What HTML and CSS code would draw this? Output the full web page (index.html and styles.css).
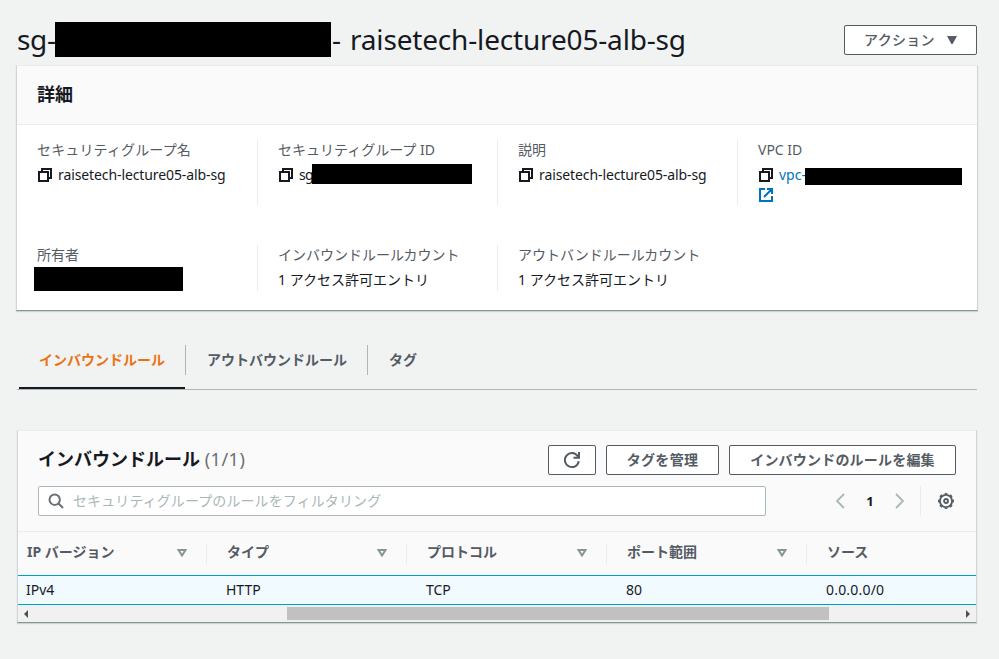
FILE: index.html
```html
<!DOCTYPE html>
<html lang="ja">
<head>
<meta charset="utf-8">
<title>raisetech-lecture05-alb-sg</title>
<link rel="stylesheet" href="styles.css">
</head>
<body>
<svg class="defs" width="0" height="0">
  <symbol id="copy" viewBox="0 0 16 16"><path d="M2 5h9v9H2zM5 5V2h9v9h-3" fill="none" stroke="currentColor" stroke-width="2"/></symbol>
  <symbol id="sort" viewBox="0 0 10 8"><path d="M1.500 1h7L5 6.500z" fill="none" stroke="currentColor" stroke-width="2"/></symbol>
</svg>
<main class="page">
  <header class="page-header">
    <h1 class="title"><span class="title-prefix">sg-</span><span class="mask mask-title"></span><span class="title-dash">-</span><span class="title-name">raisetech-lecture05-alb-sg</span></h1>
    <button class="btn btn-actions">アクション<svg width="10" height="8" viewBox="0 0 10 8"><path d="M0 0h10L5.600 8H4.400z" fill="currentColor"/></svg></button>
  </header>

  <section class="card details">
    <h2 class="card-title">詳細</h2>
    <div class="details-grid">
      <div class="field">
        <div class="label wide">セキュリティグループ名</div>
        <div class="value"><svg class="icon"><use href="#copy"/></svg><span class="latin">raisetech-lecture05-alb-sg</span></div>
      </div>
      <div class="field">
        <div class="label">セキュリティグループ ID</div>
        <div class="value"><svg class="icon"><use href="#copy"/></svg><span class="sg">sg</span><span class="mask mask-sg"></span></div>
      </div>
      <div class="field">
        <div class="label">説明</div>
        <div class="value"><svg class="icon"><use href="#copy"/></svg><span class="latin">raisetech-lecture05-alb-sg</span></div>
      </div>
      <div class="field">
        <div class="label">VPC ID</div>
        <div class="value"><svg class="icon"><use href="#copy"/></svg><a class="vpc">vpc-</a><span class="mask mask-vpc"></span></div>
        <div class="value external"><svg class="icon" viewBox="0 0 16 16"><path d="M7 2H2v12h12V9M9 2h5v5M14 2L6 10" fill="none" stroke="currentColor" stroke-width="2"/></svg></div>
      </div>
      <div class="field">
        <div class="label">所有者</div>
        <div class="value"><span class="mask mask-owner"></span></div>
      </div>
      <div class="field">
        <div class="label">インバウンドルールカウント</div>
        <div class="value">1 アクセス許可エントリ</div>
      </div>
      <div class="field last">
        <div class="label">アウトバンドルールカウント</div>
        <div class="value">1 アクセス許可エントリ</div>
      </div>
    </div>
  </section>

  <nav class="tabs">
    <a class="tab active"><span>インバウンドルール</span></a>
    <a class="tab"><span>アウトバウンドルール</span></a>
    <a class="tab"><span>タグ</span></a>
  </nav>

  <section class="card rules">
    <div class="toolbar">
      <h2 class="rules-title">インバウンドルール <span class="count">(1/1)</span></h2>
      <button class="btn btn-refresh"><svg width="18" height="18" viewBox="0 0 18 18"><path d="M15.800 10.300A7 7 0 1 1 14.600 5L16 6.700M16 1v5.800h-5.500" fill="none" stroke="currentColor" stroke-width="2"/></svg></button>
      <button class="btn btn-tags">タグを管理</button>
      <button class="btn btn-edit">インバウンドのルールを編集</button>
    </div>
    <div class="filter-row">
      <div class="search"><svg width="16" height="16" viewBox="0 0 16 16"><path d="M6.700 1.500a5 5 0 1 1 0 10.400a5 5 0 1 1 0-10.400M10.300 10.300l4.700 4.700" fill="none" stroke="currentColor" stroke-width="2"/></svg>セキュリティグループのルールをフィルタリング</div>
      <div class="pager">
        <svg width="10" height="16" viewBox="0 0 10 16"><path d="M9 1L2 8l7 7" fill="none" stroke="currentColor" stroke-width="1.800"/></svg>
        <b>1</b>
        <svg width="10" height="16" viewBox="0 0 10 16"><path d="M1 1l7 7-7 7" fill="none" stroke="currentColor" stroke-width="1.800"/></svg>
      </div>
      <div class="settings"><svg width="16" height="16" viewBox="0 0 16 16" fill="none" stroke="currentColor"><circle cx="8" cy="8" r="6.100" stroke-width="1.900"/><circle cx="8" cy="8" r="7.300" stroke-width="1.400" pathLength="80" stroke-dasharray="5 5" stroke-dashoffset="2.500"/><circle cx="8" cy="8" r="2" stroke-width="1.800"/></svg></div>
    </div>
    <div class="row head">
      <div class="cell"><span>IP バージョン</span><svg><use href="#sort"/></svg></div>
      <div class="cell"><span>タイプ</span><svg><use href="#sort"/></svg></div>
      <div class="cell"><span>プロトコル</span><svg><use href="#sort"/></svg></div>
      <div class="cell"><span>ポート範囲</span><svg><use href="#sort"/></svg></div>
      <div class="cell"><span>ソース</span></div>
    </div>
    <div class="row data">
      <div class="cell">IPv4</div>
      <div class="cell">HTTP</div>
      <div class="cell">TCP</div>
      <div class="cell">80</div>
      <div class="cell">0.0.0.0/0</div>
    </div>
    <div class="scrollbar">
      <svg width="4" height="8" viewBox="0 0 4 8"><path d="M4 0v8L0 4z" fill="#505050"/></svg>
      <div class="thumb"></div>
      <svg width="4" height="8" viewBox="0 0 4 8"><path d="M0 0v8l4-4z" fill="#505050"/></svg>
    </div>
  </section>
</main>
</body>
</html>
```
FILE: styles.css
```css
* { box-sizing: border-box; }
body {
  margin: 0;
  background: #f1f3f3;
  color: #16191f;
  font: 14px/20px "Noto Sans", "Noto Sans CJK JP", sans-serif;
  overflow: hidden;
}
svg { display: block; flex: none; }
.defs { position: absolute; }
h1, h2 { margin: 0; }
.page { width: 999px; height: 659px; padding: 22px 22px 0 16px; }
.mask { display: block; flex: none; background: #000; }

.page-header { display: flex; height: 43px; align-items: flex-start; justify-content: space-between; }
.title { display: flex; font-size: 28px; line-height: 34px; font-weight: 400; padding-left: 1px; white-space: nowrap; }
.title-prefix { width: 38px; letter-spacing: -.3px; }
.title-name { letter-spacing: -.17px; }
.mask-title { width: 276px; height: 35px; }
.title-dash { width: 19px; padding-left: 1px; }
.btn {
  height: 30px;
  display: flex;
  align-items: center;
  justify-content: center;
  flex: none;
  margin: 0;
  padding: 0;
  background: #fff;
  border: 1px solid #545b64;
  border-radius: 2px;
  color: #545b64;
  font: 500 14px/20px "Noto Sans", "Noto Sans CJK JP", sans-serif;
}
.btn-actions { width: 133px; margin: 3px 0 0; gap: 12px; letter-spacing: .3px; }

.card {
  background: #fff;
  border: 1px solid #d0d5d6;
  border-top-color: #eaeded;
  border-bottom-color: #879596;
  box-shadow: 0 1px 1px rgba(0, 28, 36, .15);
}
.details { height: 246px; width: 962px; }
.card-title {
  height: 59px;
  padding-left: 20px;
  background: #fafafa;
  border-bottom: 1px solid #eaeded;
  font-size: 18px;
  line-height: 57px;
}
.details-grid { display: grid; grid-template-columns: 241px repeat(3, 240px); grid-template-rows: 65px 46px; row-gap: 40px; padding-top: 15px; }
.field { padding-left: 20px; border-right: 1px solid #eaeded; white-space: nowrap; }
.field:nth-child(4), .field.last { border-right: 0; }
.label { height: 25px; color: #545b64; }
.label.wide { letter-spacing: .15px; }
.value { display: flex; height: 20px; align-items: center; }
.icon { width: 16px; height: 16px; margin-right: 5px; }
.latin { letter-spacing: -.1px; }
.sg { width: 13px; letter-spacing: -.6px; }
.mask-sg { width: 160px; height: 20px; margin-top: -2px; }
.vpc { width: 26px; color: #0073bb; }
.mask-vpc { width: 157px; height: 17px; margin-top: 3px; }
.external { color: #0073bb; }
.mask-owner { width: 149px; height: 24px; margin: -2px 0 0 -3px; }

.tabs { display: flex; height: 79px; margin-left: 1px; padding-top: 34px; border-bottom: 1px solid #aab7b8; white-space: nowrap; }
.tab { height: 44px; color: #545b64; font-weight: 700; }
.tab span { display: block; height: 30px; padding: 0 21px; line-height: 30px; border-left: 1px solid #aab7b8; }
.tab:nth-child(2) span { padding-right: 20px; }
.tab.active { width: 166px; margin: 0 0 0 2px; color: #ec7211; border-bottom: 2px solid #16191f; }
.tab.active span { border: 0; padding-left: 20px; padding-right: 0; }

.rules { width: 960px; height: 193px; margin: 40px 0 0 1px; background: #fafafa; }
.toolbar { display: flex; height: 55px; padding: 14px 20px 0; align-items: flex-start; }
.rules-title { flex: 1; font-size: 18px; line-height: 29px; white-space: nowrap; }
.count { color: #687078; font-weight: 400; letter-spacing: .5px; }
.btn-refresh { width: 48px; }
.btn-tags { width: 113px; margin: 0 10px; font-weight: 700; letter-spacing: .3px; }
.btn-edit { width: 227px; font-weight: 700; letter-spacing: .2px; }
.filter-row { display: flex; height: 46px; padding-left: 20px; border-bottom: 1px solid #eaeded; }
.search { display: flex; align-items: center; width: 728px; height: 30px; padding-left: 9px; gap: 9px; background: #fff; border: 1px solid #aab7b8; border-radius: 2px; color: #aab7b8; letter-spacing: .1px; }
.search svg { color: #687078; }
.pager { display: flex; width: 154px; height: 30px; padding: 0 15px 0 69px; align-items: center; justify-content: space-between; color: #aab7b8; }
.pager b { color: #16191f; font-size: 13px; }
.settings { display: flex; align-items: center; height: 30px; padding-left: 17px; border-left: 1px solid #eaeded; color: #545b64; }
.row { display: flex; overflow: hidden; }
.cell { flex: none; width: 200px; padding-left: 8px; }
.head { height: 43px; padding-top: 11px; color: #545b64; font-weight: 700; }
.head .cell { display: flex; align-items: center; justify-content: space-between; height: 21px; padding: 0 19px 0 20px; border-right: 1px solid #eaeded; }
.head .cell:first-child { width: 189px; padding-left: 9px; }
.head .cell:last-child { border: 0; }
.head span { margin-top: -3px; }
.head svg { width: 10px; height: 8px; margin-top: -1px; color: #879596; }
.data { height: 30px; background: #f1faff; border: solid #00a1c9; border-width: 1px 0; line-height: 28px; }
.data .cell:last-child { letter-spacing: .2px; }
.scrollbar { display: flex; align-items: center; justify-content: space-between; height: 17px; padding: 0 6px; background: #f1f1f1; }
.thumb { width: 542px; height: 13px; margin-left: 121px; background: #c1c1c1; }
```
